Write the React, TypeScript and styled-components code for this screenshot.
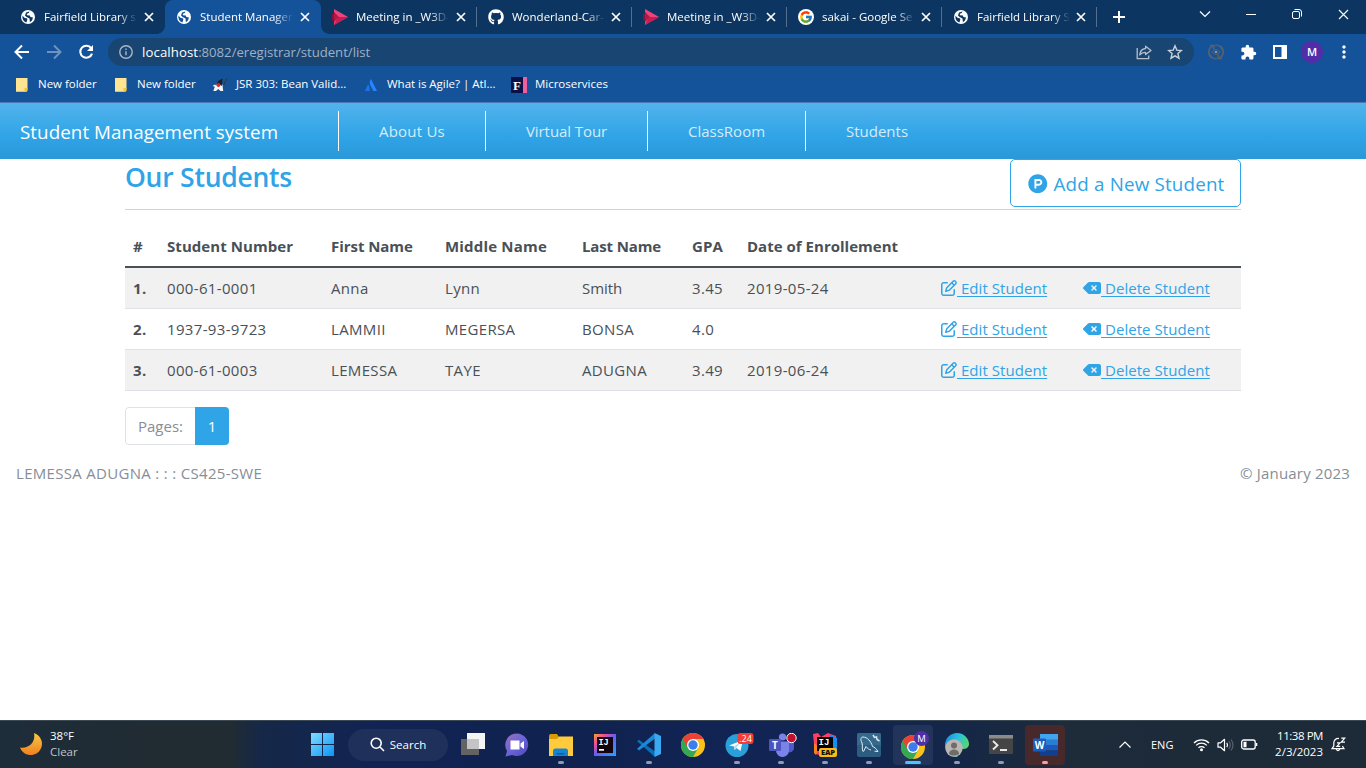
import React from 'react';
import styled, { createGlobalStyle } from 'styled-components';
import { FcGoogle } from 'react-icons/fc';
import { FaGithub, FaProductHunt, FaRegPenToSquare, FaDeleteLeft } from 'react-icons/fa6';
import { MdExtension, MdMoreVert } from 'react-icons/md';

const GlobalStyle = createGlobalStyle`
  * { box-sizing: border-box; }
  body {
    margin: 0;
    overflow: hidden;
    background: #fff;
    font-family: "Open Sans", "Noto Sans", sans-serif;
    font-size: 15px;
    line-height: 24px;
    color: #495057;
  }
  svg { display: block; flex: none; }
`;

const Screen = styled.div`
  display: flex;
  flex-direction: column;
  width: 1366px;
  height: 768px;
  overflow: hidden;
`;

/* ---------- browser ---------- */

const TabStrip = styled.div`
  display: flex;
  height: 34px;
  padding-left: 9px;
  background: #0c3661;
  color: #fff;
`;

const Tab = styled.div<{ $w: number; $active?: boolean }>`
  position: relative;
  display: flex;
  align-items: center;
  width: ${(p) => p.$w}px;
  height: 34px;
  padding: 0 11px 1px 11px;
  border-radius: 8px 8px 0 0;
  background: ${(p) => (p.$active ? '#14539a' : 'transparent')};
  font-size: 11.5px;
  color: #fff;

  &::before,
  &::after {
    content: ${(p) => (p.$active ? "''" : 'none')};
    position: absolute;
    bottom: 0;
    width: 8px;
    height: 8px;
  }
  &::before {
    left: -8px;
    background: radial-gradient(circle at 0 0, transparent 7.5px, #14539a 8px);
  }
  &::after {
    right: -8px;
    background: radial-gradient(circle at 100% 0, transparent 7.5px, #14539a 8px);
  }
`;

const TabRule = styled.span`
  width: 1px;
  height: 20px;
  margin: 7px 0 0 -1px;
  background: #54708f;
`;

const Favicon = styled.span`
  display: flex;
  justify-content: center;
  width: 16px;
  margin-right: 8px;
`;

const TabTitle = styled.span`
  width: 93px;
  overflow: hidden;
  white-space: nowrap;
  mask-image: linear-gradient(to right, #000 80%, transparent 100%);
`;

const TabClose = styled.span`
  display: flex;
  margin-left: auto;
`;

const NewTab = styled.span`
  display: flex;
  align-items: center;
  margin-left: 15px;
`;

const WindowButtons = styled.div`
  display: flex;
  align-items: center;
  height: 28px;
  margin-left: auto;
`;

const WindowButton = styled.span`
  display: flex;
  align-items: center;
  justify-content: center;
  width: 46px;
`;

const AddressRow = styled.div`
  display: flex;
  align-items: center;
  height: 34px;
  padding: 2px 0 0;
  background: #14539a;
`;

const NavButton = styled.span`
  display: flex;
  justify-content: center;
  width: 32px;
`;

const NavButtons = styled.div`
  display: flex;
  padding: 0 6px;
`;

const Omnibox = styled.div`
  display: flex;
  align-items: center;
  width: 1086px;
  height: 28px;
  padding: 0 11px;
  border-radius: 14px;
  background: #194573;
  font-size: 13.2px;
  color: #9fb1c5;
`;

const Host = styled.span`
  color: #fff;
  letter-spacing: 0.1px;
`;

const Url = styled.span`
  flex: 1;
  margin-left: 9px;
  padding-bottom: 1px;
  letter-spacing: -0.03px;
  white-space: nowrap;
`;

const OmniActions = styled.span`
  display: flex;
  align-items: center;
  gap: 15px;
`;

const Extensions = styled.div`
  display: flex;
  align-items: center;
  margin-left: 6px;
`;

const Avatar = styled.span`
  display: flex;
  align-items: center;
  justify-content: center;
  width: 22px;
  height: 22px;
  margin: 0 5px;
  border-radius: 50%;
  background: #512da8;
  font-size: 11px;
  font-weight: 600;
  color: #fff;
`;

const Bookmarks = styled.div`
  display: flex;
  align-items: center;
  height: 34px;
  padding: 0 0 0 14px;
  background: #14539a;
  font-size: 11.5px;
  color: #fff;
`;

const Bookmark = styled.span<{ $w: number; $gap?: number }>`
  display: flex;
  align-items: center;
  gap: ${(p) => p.$gap ?? 8}px;
  width: ${(p) => p.$w}px;
  white-space: nowrap;
`;

const BookmarkLabel = styled.span`
  padding-bottom: 2px;
  letter-spacing: -0.02px;
`;

const ChromeEdge = styled.div`
  height: 1px;
  background: #4b79b1;
`;

/* ---------- page ---------- */

const Page = styled.div`
  flex: 1;
  background: #fff;
`;

const SiteNav = styled.nav`
  display: flex;
  align-items: center;
  height: 56px;
  padding-left: 20px;
  background: linear-gradient(#52b3ec, #2fa4e7 60%, #2b98d8);
`;

const Brand = styled.span`
  width: 318px;
  padding-top: 2px;
  font-size: 18.8px;
  letter-spacing: 0.06px;
  line-height: 30px;
  color: #fff;
`;

const NavLink = styled.span<{ $w: number; $ls?: number }>`
  width: ${(p) => p.$w}px;
  height: 40px;
  padding: 8px 0 8px 40px;
  border-left: 1px solid #fff;
  color: rgba(255, 255, 255, 0.8);
  letter-spacing: ${(p) => p.$ls ?? 0}px;
  white-space: nowrap;
`;

const Container = styled.main`
  width: 1116px;
  margin: 0 auto;
`;

const TitleRow = styled.div`
  display: flex;
  justify-content: space-between;
  height: 51px;
  border-bottom: 1px solid #d2d3d4;
  margin-bottom: 16px;
`;

const Title = styled.h2`
  margin: 0;
  padding-top: 1px;
  font-size: 26.5px;
  font-weight: 600;
  letter-spacing: -0.24px;
  line-height: 34px;
  color: #2fa4e7;
`;

const AddButton = styled.a`
  display: flex;
  align-items: center;
  gap: 6px;
  width: 231px;
  height: 48px;
  padding: 1px 16px 0 17px;
  border: 1px solid #2fa4e7;
  border-radius: 5px;
  color: #2fa4e7;
  font-size: 18.8px;
  letter-spacing: 0.18px;
  white-space: nowrap;
`;

const Table = styled.table`
  width: 100%;
  table-layout: fixed;
  border-collapse: separate;
  border-spacing: 0;
`;

const Th = styled.th<{ $w: number; $ls: number }>`
  width: ${(p) => p.$w}px;
  height: 42px;
  padding: 0 8px 1px;
  border-bottom: 2px solid #495057;
  text-align: left;
  font-weight: 700;
  letter-spacing: ${(p) => p.$ls}px;
  white-space: nowrap;
`;

const Row = styled.tr<{ $striped: boolean }>`
  background: ${(p) => (p.$striped ? '#f1f1f1' : '#fff')};
`;

const Cell = styled.td<{ $bold?: boolean; $ls?: number }>`
  height: 41px;
  padding: 0 8px;
  border-bottom: 1px solid #dee2e6;
  font-weight: ${(p) => (p.$bold ? 700 : 400)};
  letter-spacing: ${(p) => p.$ls ?? 0}px;
  white-space: nowrap;
`;

const Action = styled.a`
  display: flex;
  align-items: center;
  color: #2fa4e7;
`;

const ActionText = styled.span`
  white-space: pre;
  letter-spacing: 0.06px;
  text-decoration: underline;
  text-underline-offset: 2px;
`;

const Pager = styled.div`
  display: flex;
  width: 104px;
  height: 38px;
  margin: 16px 0;
  border-radius: 4px;
  overflow: hidden;
`;

const PagerLabel = styled.span`
  width: 70px;
  padding: 6px 12px;
  border: 1px solid #dee2e6;
  border-right: 0;
  border-radius: 4px 0 0 4px;
  color: #868e96;
`;

const PagerCurrent = styled.span`
  width: 34px;
  padding: 7px 0;
  background: #2fa4e7;
  text-align: center;
  color: #fff;
`;

const Footer = styled.footer`
  display: flex;
  justify-content: space-between;
  padding: 0 16px;
  color: #868e96;
`;

const FooterText = styled.span<{ $ls: number }>`
  letter-spacing: ${(p) => p.$ls}px;
`;

/* ---------- taskbar ---------- */

const Taskbar = styled.div`
  display: flex;
  align-items: center;
  height: 48px;
  border-top: 1px solid #3b4954;
  background: linear-gradient(
    90deg, #1d2d3a 0, #202b33 130px, #212b32 230px, #152848 262px, #112353 380px,
    #10224f 560px, #112454 760px, #13264b 930px, #1d2b3a 1060px, #1d2a37 1366px
  );
  color: #fff;
  font-size: 11.5px;
`;

const Weather = styled.div`
  display: flex;
  align-items: center;
  gap: 8px;
  width: 300px;
  padding: 0 0 2px 20px;
  line-height: 16px;
`;

const Dim = styled.div`
  color: #c0c5ca;
`;

const Slot = styled.span<{ $bg?: string; $run?: string; $runW?: number; $shift?: number }>`
  position: relative;
  display: flex;
  align-items: center;
  justify-content: center;
  width: 40px;
  height: 40px;
  margin: 0 2px;
  padding-left: ${(p) => p.$shift ?? 0}px;
  border-radius: 4px;
  background: ${(p) => p.$bg ?? 'transparent'};

  &::after {
    content: ${(p) => (p.$run ? "''" : 'none')};
    position: absolute;
    left: calc(50% - ${(p) => (p.$runW ?? 6) / 2}px);
    bottom: 1px;
    width: ${(p) => p.$runW ?? 6}px;
    height: 3px;
    border-radius: 2px;
    background: ${(p) => p.$run ?? 'transparent'};
  }
`;

const SearchPill = styled.div`
  display: flex;
  align-items: center;
  justify-content: center;
  gap: 5px;
  width: 100px;
  height: 32px;
  margin: 0 3px 0 4px;
  border-radius: 16px;
  background: #1f305b;
`;

const Tray = styled.div`
  display: flex;
  align-items: center;
  margin-left: auto;
  padding-right: 20px;
`;

const Lang = styled.span`
  width: 42px;
  margin-left: 20px;
  font-size: 11px;
`;

const TrayIcons = styled.div`
  display: flex;
  align-items: center;
  gap: 7px;
`;

const Clock = styled.div`
  width: 65px;
  margin-right: 8px;
  padding-bottom: 2px;
  text-align: right;
  line-height: 16px;
`;

const ClockTime = styled.div`
  letter-spacing: -0.45px;
`;

/* ---------- drawings ---------- */

const Globe = ({ land = '#0c3661' }: { land?: string }) => (
  <svg width="14" height="14" viewBox="0 0 14 14">
    <circle cx="7" cy="7" r="7" fill="#fff" />
    <path
      d="M1.500 5.800 3.800 8l2 .3.600 1.200-1 2.900C2.500 11.800 1.100 9 1.500 5.800zM5 2.400l3.400-1L7.800 3l-2 .8L6 5.200l2.800.2L9.400 7 12 7.600 11 10.400 8.900 12.200l-.4-3.600L5.600 7 4 5.400z"
      fill={land}
    />
  </svg>
);

const Stream = () => (
  <svg width="16" height="16" viewBox="0 0 16 16">
    <path d="M2 0 16 8 2 16z" fill="#f0437c" />
    <path d="M2 16 16 8H6z" fill="#c81e4f" />
    <path d="M0 4.500 6 8 0 12z" fill="#8c1238" />
    <path d="M2 3 7 8 2 13z" fill="#b01a48" />
  </svg>
);

const Cross = ({ s = 8, w = 1.7 }: { s?: number; w?: number }) => (
  <svg width={s + 2} height={s + 2} viewBox={`-1 -1 ${s + 2} ${s + 2}`} stroke="#fff" strokeWidth={w}>
    <path d={`M0 0 ${s} ${s}M${s} 0 0 ${s}`} />
  </svg>
);

const Arrow = ({ forward }: { forward?: boolean }) => (
  <svg width="16" height="16" viewBox="0 0 16 16" fill="none" stroke={forward ? '#6d93c0' : '#fff'} strokeWidth="2">
    <path d={forward ? 'M1 8h13M8 1.500 14.500 8 8 14.500' : 'M15 8H2M8 1.500 1.500 8 8 14.500'} />
  </svg>
);

const Reload = () => (
  <svg width="16" height="16" viewBox="0 0 16 16">
    <path d="M13.200 4.200A6 6 0 1 0 14 9.600" fill="none" stroke="#fff" strokeWidth="2.100" />
    <path d="M15 1v6H9z" fill="#fff" />
  </svg>
);

const Info = () => (
  <svg width="14" height="14" viewBox="0 0 14 14" fill="none" stroke="#aab8c8" strokeWidth="1.400">
    <circle cx="7" cy="7" r="6.200" />
    <path d="M7 6.300v4M7 3.500v1.500" />
  </svg>
);

const Share = () => (
  <svg width="16" height="16" viewBox="0 0 16 16" fill="none" stroke="#b5c0cc" strokeWidth="1.300">
    <path d="M1.200 4v10.600h11.500v-3" />
    <path d="M9.600 2.200 15 6.400 9.600 10.600V8.300C7 8.300 5 9.200 3.800 11 4 7.600 6 4.900 9.600 4.500z" strokeLinejoin="round" />
  </svg>
);

const Star = () => (
  <svg width="16" height="16" viewBox="0 0 16 16" fill="none" stroke="#c9d1da" strokeWidth="1.400">
    <path d="m8 1.800 1.800 4.300 4.600.4-3.500 3.100 1.100 4.600L8 11.800 4 14.200l1.100-4.600L1.600 6.500l4.600-.4z" />
  </svg>
);

const SyncEye = () => (
  <svg width="16" height="16" viewBox="0 0 16 16" fill="none" stroke="#55616e" strokeWidth="1.700">
    <path d="M4 14A7 7 0 0 1 4.500 2M1.800 1.500h4V5.500M12 2a7 7 0 0 1-.5 12M14.200 14.500h-4v-4" />
    <path d="M7 1.200a6.700 6.700 0 0 1 7.500 5.300M9 14.800a6.700 6.700 0 0 1-7.500-5.300" strokeWidth="1.300" />
    <path d="M4 8q4-5 8 0-4 5-8 0z" strokeWidth="1.200" />
    <circle cx="8" cy="8" r="1.300" fill="#8a949e" stroke="none" />
  </svg>
);

const SidePanel = () => (
  <svg width="14" height="14" viewBox="0 0 14 14">
    <path d="M0 0h14v14H0zM2 2v10h6.500V2z" fill="#fff" fillRule="evenodd" />
  </svg>
);

const Note = () => (
  <svg width="16" height="16" viewBox="0 0 16 16">
    <path d="M2 1h11.500v10.500l-.5 3H2z" fill="#ffe491" />
    <path d="M10.500 14.500v-3.200l3-.6v2.800l-.6 1z" fill="#f0c43c" />
    <path d="M2 14h10v1H2z" fill="#e8c04c" />
  </svg>
);

const Duke = () => (
  <svg width="16" height="16" viewBox="0 0 16 16">
    <path d="M8 4 3.500 8l-2.200 6H4l2.200-2 2.300 2h2.700l-.7-6z" fill="#f4f6f8" />
    <path d="M10.500 1.500 6 4 4 8.500l3.500-1L9.800 9z" fill="#1c2026" />
    <circle cx="6.500" cy="8" r="1.900" fill="#e0252f" />
    <path d="m12 8 1-3.500M13.800 4l1-2.500" stroke="#2c3c50" strokeWidth="1.500" />
    <path d="m.5 9 2.500-1.500L4 10z" fill="#fff" />
  </svg>
);

const Atlassian = () => (
  <svg width="14" height="14" viewBox="0 0 14 14">
    <path d="M7 1c-1.800 3-1.500 5 0 7.500L9.300 13H13z" fill="#2684ff" />
    <path d="M4 6.200 1 13h4.500C6 10.500 5.500 8 4 6.200z" fill="#1d72ea" />
  </svg>
);

const FBook = () => (
  <svg width="16" height="16" viewBox="0 0 16 16">
    <path d="M0 0h12v16H0z" fill="#0b1047" />
    <path d="M12 0h4v16h-4z" fill="#ee5f9d" />
    <text x="2" y="13" fontSize="13" fontWeight="700" fill="#fff" fontFamily="Liberation Serif">F</text>
  </svg>
);

const Moon = () => (
  <svg width="22" height="22" viewBox="0 0 22 22">
    <defs>
      <linearGradient id="moon" x1="0" y1="0" x2="0" y2="1">
        <stop offset="0" stopColor="#f6c944" />
        <stop offset="1" stopColor="#f08020" />
      </linearGradient>
    </defs>
    <path d="M14 0A11.300 11.300 0 1 1 0 14.500C8.500 16 16 9.500 14 0z" fill="url(#moon)" />
  </svg>
);

const Windows = () => (
  <svg width="23" height="23" viewBox="0 0 23 23">
    <defs>
      <linearGradient id="win" x1="0" y1="0" x2="1" y2="1">
        <stop offset="0" stopColor="#7fdcff" />
        <stop offset="1" stopColor="#0a94f8" />
      </linearGradient>
    </defs>
    <path d="M0 0h11v11H0zM12 0h11v11H12zM0 12h11v11H0zM12 12h11v11H12z" fill="url(#win)" />
  </svg>
);

const Magnifier = () => (
  <svg width="15" height="15" viewBox="0 0 15 15" fill="none" stroke="#fff" strokeWidth="1.600">
    <circle cx="6.200" cy="6.200" r="5" />
    <path d="m10 10 4 4" />
  </svg>
);

const TaskView = () => (
  <svg width="24" height="23" viewBox="0 0 24 23">
    <path d="M6 0h18v16H6z" fill="#f4f4f4" />
    <path d="M0 6h18v16H0z" fill="#636363" />
    <path d="M6 6h12v10H6z" fill="#c2c4c6" />
  </svg>
);

const Chat = () => (
  <svg width="24" height="24" viewBox="0 0 24 24">
    <defs>
      <linearGradient id="chat" x1="0" y1="0" x2="1" y2="1">
        <stop offset="0" stopColor="#9b6fb8" />
        <stop offset=".5" stopColor="#6a64d8" />
        <stop offset="1" stopColor="#5048b8" />
      </linearGradient>
    </defs>
    <path d="M12 .5a11.300 11.300 0 1 1-5 21.500L.5 23.500 2 18A11.500 11.500 0 0 1 12 .5z" fill="url(#chat)" />
    <path d="M5.500 7.500h9v9h-9zM15.500 10.500 19 8v8l-3.500-2.500z" fill="#fff" />
  </svg>
);

const Explorer = () => (
  <svg width="24" height="22" viewBox="0 0 24 22">
    <path d="M0 2Q0 0 2 0h6l2 3v4H0z" fill="#d99a07" />
    <path d="M0 5h8l2-2.500h14V22H0z" fill="#ffcb3c" />
    <path d="M4 22v-5q0-2.500 2.500-2.500h10Q19 14.500 19 17v5z" fill="#1683d3" />
    <path d="M7.500 19h8v1.500h-8z" fill="#0b5da4" />
  </svg>
);

const Idea = () => (
  <svg width="22" height="22" viewBox="0 0 22 22">
    <defs>
      <linearGradient id="idea" x1="0" y1="0" x2="1" y2="1">
        <stop offset="0" stopColor="#f9a02d" />
        <stop offset=".25" stopColor="#ef4f96" />
        <stop offset=".5" stopColor="#6a5cf5" />
        <stop offset="1" stopColor="#21a5ff" />
      </linearGradient>
    </defs>
    <path d="M0 0h22v22H0z" fill="url(#idea)" />
    <path d="M3 3h16v16H3z" fill="#120510" />
    <text x="4.500" y="11" fontSize="8.500" fontWeight="700" fill="#fff" fontFamily="Liberation Mono">IJ</text>
    <path d="M5 15h5v1.700H5z" fill="#fff" />
  </svg>
);

const VsCode = () => (
  <svg width="24" height="24" viewBox="0 0 24 24">
    <path d="M0 8.200 2 6.700 18 18.500V24z" fill="#0a6fb8" />
    <path d="M0 15.800 18 0v5.500L2 17.500z" fill="#1a8ad8" />
    <path d="M17.500 0 24 3v18l-6.500 3z" fill="#3aa9f2" />
  </svg>
);

const ChromeLogo = () => (
  <svg width="24" height="24" viewBox="0 0 24 24">
    <circle cx="12" cy="12" r="12" fill="#fbc116" />
    <path d="M1.600 6A12 12 0 0 0 12 24l5.200-9-5.200-3z" fill="#34a853" />
    <path d="M12 12 1.600 6A12 12 0 0 1 22.400 6H12z" fill="#ea4335" />
    <path d="M1.600 6 6.800 15 12 12V6z" fill="#ea4335" />
    <path d="M1.600 6 6.800 15 5 16 .8 8z" fill="#34a853" />
    <circle cx="12" cy="12" r="6" fill="#fff" />
    <circle cx="12" cy="12" r="4.700" fill="#3b7ded" />
  </svg>
);

const Telegram = () => (
  <svg width="30" height="24" viewBox="0 0 30 24">
    <circle cx="12" cy="12.500" r="11.500" fill="#2b9fd9" />
    <path d="m4 12.500 14-5.500-2.500 11-4-3-2 2-.5-3.500z" fill="#fff" />
    <path d="m9 13.500 7-5-4.500 6-2 2.500z" fill="#b9d9ec" />
    <rect x="12.500" y="0" width="16" height="11" rx="3" fill="#f23f36" />
    <text x="14" y="8.800" fontSize="9" fill="#fff" fontFamily="Open Sans" textLength="13">.24</text>
  </svg>
);

const Teams = () => (
  <svg width="30" height="24" viewBox="0 0 30 24">
    <circle cx="14.500" cy="4" r="3.600" fill="#7b83eb" />
    <path d="M19 8.500h7v7a4.500 4.500 0 0 1-6 3.500z" fill="#5059c9" />
    <path d="M8 8.500h13v8.500a6.500 6.500 0 0 1-13 1z" fill="#7b83eb" />
    <rect x="1" y="6" width="12" height="12" rx="1" fill="#4b53bc" />
    <text x="4" y="15.700" fontSize="10" fontWeight="700" fill="#fff" fontFamily="Open Sans">T</text>
    <circle cx="23.500" cy="5" r="4.700" fill="#c50f2e" stroke="#fff" strokeWidth="1" />
  </svg>
);

const IdeaEap = () => (
  <svg width="24" height="24" viewBox="0 0 24 24">
    <path d="M0 1 5 0l3 4 7-4 8 3 1 16-8 5-14-3z" fill="#ff3f62" />
    <path d="m16 1 8 4v12l-8 2z" fill="#178cf5" />
    <path d="m1 10 5 4-3 8-2-2z" fill="#fc801d" />
    <path d="M4 4h16v14H4z" fill="#000" />
    <text x="5.500" y="12" fontSize="9" fontWeight="700" fill="#fff" fontFamily="Liberation Mono">IJ</text>
    <rect x="6" y="15" width="18" height="9" rx="2" fill="#ffb912" />
    <text x="8" y="22.300" fontSize="7.500" fontWeight="800" fill="#111" fontFamily="Open Sans" textLength="14">EAP</text>
  </svg>
);

const MySql = () => (
  <svg width="24" height="24" viewBox="0 0 24 24">
    <rect width="24" height="24" rx="2" fill="#2a5d80" />
    <path d="M0 2q0-2 2-2h20q2 0 2 2v10H0z" fill="#356a8c" />
    <path
      d="M6 18.500C4.500 15 6 13 5 10 3 6 4 4 6 4c4 0 8 4 9.500 9.500 2 .5 4 2.500 5.500 5l-3.500-.3M6.500 18.500l2.500-5c1.500 2 3 3 5 3.500"
      fill="none"
      stroke="#e6eef4"
      strokeWidth="1"
    />
    <path d="m16 2 1.500 2.500 2-.5.5 2.500 2.500 1.500" fill="none" stroke="#dbe6ee" strokeWidth="1.500" />
  </svg>
);

const ChromeProfile = () => (
  <svg width="28" height="28" viewBox="0 0 28 28">
    <svg y="4" width="24" height="24">
      <ChromeLogo />
    </svg>
    <circle cx="20.500" cy="7.500" r="7.500" fill="#512da8" />
    <text x="20.500" y="11" fontSize="9.500" textAnchor="middle" fill="#fff" fontFamily="Open Sans">M</text>
  </svg>
);

const Edge = () => (
  <svg width="24" height="24" viewBox="0 0 24 24">
    <defs>
      <linearGradient id="edge" x1="0" y1=".2" x2="1" y2=".6">
        <stop offset="0" stopColor="#1b8fdd" />
        <stop offset=".5" stopColor="#2cc3dc" />
        <stop offset="1" stopColor="#62d957" />
      </linearGradient>
    </defs>
    <path d="M12 0a12 11.500 0 0 1 12 11c0 4-4 5.500-7.500 5L12 24A12 12 0 0 1 12 0z" fill="url(#edge)" />
    <path d="M10 8c4-1 7 2 6 7l-2 5z" fill="#1467b3" />
    <circle cx="9" cy="15" r="8.700" fill="#b9b6b3" />
    <circle cx="9" cy="12.500" r="3" fill="#6f6c69" />
    <path d="M4 21c0-6 10-6 10 0-3 2-7 2-10 0z" fill="#6f6c69" />
  </svg>
);

const Terminal = () => (
  <svg width="24" height="19" viewBox="0 0 24 19">
    <rect width="24" height="19" rx="1" fill="#454545" />
    <path d="M0 0h24v3.500H0z" fill="#8b8b8b" />
    <path d="m4 6 4.500 4.200L4 14.500M11 15h7" fill="none" stroke="#e8e8e8" strokeWidth="1.900" />
  </svg>
);

const Word = () => (
  <svg width="25" height="22" viewBox="0 0 25 22">
    <path d="M7 0h18v6H7z" fill="#41a5ee" />
    <path d="M7 5.500h18V11H7z" fill="#2b7cd3" />
    <path d="M7 11h18v5.500H7z" fill="#185abd" />
    <path d="M7 16.500h18V22H7z" fill="#103f91" />
    <rect x="0" y="4.500" width="13" height="13" rx="1" fill="#1a5dbe" />
    <text x="1.700" y="14.700" fontSize="10" fontWeight="700" fill="#fff" fontFamily="Open Sans" textLength="9.600">W</text>
  </svg>
);

const Chevron = ({ up }: { up?: boolean }) => (
  <svg width="12" height="8" viewBox="0 0 12 8" fill="none" stroke="#fff" strokeWidth="1.200">
    <path d={up ? 'M.5 6.500 6 1l5.500 5.500' : 'M1 1.500 6 6.500l5-5'} />
  </svg>
);

const Wifi = () => (
  <svg width="17" height="14" viewBox="0 0 17 14" fill="none" stroke="#fff" strokeWidth="1.300">
    <path d="M1 5a10.600 10.600 0 0 1 15 0M3.200 7.400a7.500 7.500 0 0 1 10.600 0M5.500 9.800a4.200 4.200 0 0 1 6 0" />
    <circle cx="8.500" cy="11.700" r="1.500" fill="#fff" stroke="none" />
  </svg>
);

const Speaker = () => (
  <svg width="17" height="14" viewBox="0 0 17 14" fill="none" stroke="#fff" strokeWidth="1.200">
    <path d="M1 4.800h2.600L7.500 1.300v11.400L3.600 9.200H1z" strokeLinejoin="round" />
    <path d="M9.800 4.800q1.500 2.200 0 4.400" />
    <path d="M11.800 3q3 4 0 8M14 1.500q4 5.500 0 11" stroke="#56636f" />
  </svg>
);

const Battery = () => (
  <svg width="17" height="11" viewBox="0 0 17 11">
    <rect x=".7" y="1" width="13.500" height="9" rx="2" fill="none" stroke="#fff" strokeWidth="1.300" />
    <path d="M2.500 2.800h3v5.400h-3zM15 4h1.300v3H15z" fill="#fff" />
  </svg>
);

const Bell = () => (
  <svg width="15" height="15" viewBox="0 0 15 15" fill="none" stroke="#fff" strokeWidth="1.200">
    <path d="M8 1.500C4.500 1.200 2.800 3.500 2.800 6v3L1 11.700h12l-1.600-2.700M5.200 12q1.800 3.200 3.600 0" />
    <path d="M10.300 1.200h3.400l-3.400 4h3.700M6 5.800h3l-3 3.500h3.200" />
  </svg>
);

const GoogleDisc = styled.span`
  display: flex;
  align-items: center;
  justify-content: center;
  width: 16px;
  height: 16px;
  border-radius: 50%;
  background: #fff;
`;

/* ---------- data ---------- */

const tabs = [
  { title: 'Fairfield Library sy', icon: <Globe />, w: 156 },
  { title: 'Student Managem', icon: <Globe land="#14539a" />, w: 156, active: true },
  { title: 'Meeting in _W3D-', icon: <Stream />, w: 156 },
  { title: 'Wonderland-Car-', icon: <FaGithub size={16} />, w: 155 },
  { title: 'Meeting in _W3D-', icon: <Stream />, w: 155 },
  { title: 'sakai - Google Se', icon: <GoogleDisc><FcGoogle size={14} /></GoogleDisc>, w: 155 },
  { title: 'Fairfield Library Sy', icon: <Globe />, w: 155 },
];

const bookmarks = [
  { label: 'New folder', icon: <Note />, w: 99 },
  { label: 'New folder', icon: <Note />, w: 99 },
  { label: 'JSR 303: Bean Valid...', icon: <Duke />, w: 152 },
  { label: 'What is Agile? | Atl...', icon: <Atlassian />, w: 147, gap: 9 },
  { label: 'Microservices', icon: <FBook />, w: 110 },
];

const columns: [string, number, number][] = [
  ['#', 34, 0],
  ['Student Number', 164, 0.06],
  ['First Name', 114, -0.05],
  ['Middle Name', 137, 0.19],
  ['Last Name', 110, -0.14],
  ['GPA', 55, 0.1],
  ['Date of Enrollement', 194, 0.02],
  ['', 142, 0],
  ['', 166, 0],
];

const students = [
  ['000-61-0001', 'Anna', 'Lynn', 'Smith', '3.45', '2019-05-24'],
  ['1937-93-9723', 'LAMMII', 'MEGERSA', 'BONSA', '4.0', ''],
  ['000-61-0003', 'LEMESSA', 'TAYE', 'ADUGNA', '3.49', '2019-06-24'],
];

const runGrey = '#8f9bb0';

export default function App() {
  return (
    <Screen>
      <GlobalStyle />
      <TabStrip>
        {tabs.map((t, i) => (
          <React.Fragment key={i}>
            <Tab $w={t.w} $active={t.active}>
              <Favicon>{t.icon}</Favicon>
              <TabTitle>{t.title}</TabTitle>
              <TabClose>
                <Cross />
              </TabClose>
            </Tab>
            {i > 1 && <TabRule />}
          </React.Fragment>
        ))}
        <NewTab>
          <svg width="14" height="14" viewBox="0 0 14 14" stroke="#fff" strokeWidth="2">
            <path d="M7 1v12M1 7h12" />
          </svg>
        </NewTab>
        <WindowButtons>
          <WindowButton>
            <Chevron />
          </WindowButton>
          <WindowButton>
            <svg width="10" height="1">
              <path d="M0 .5h10" stroke="#fff" strokeWidth="1" />
            </svg>
          </WindowButton>
          <WindowButton>
            <svg width="10" height="10" viewBox="0 0 10 10" fill="none" stroke="#fff">
              <rect x=".5" y="2.500" width="7" height="7" rx="1.500" />
              <path d="M2.500.5H7A2.500 2.500 0 0 1 9.500 3v4.500" />
            </svg>
          </WindowButton>
          <WindowButton>
            <Cross s={9} w={1.1} />
          </WindowButton>
        </WindowButtons>
      </TabStrip>

      <AddressRow>
        <NavButtons>
          <NavButton>
            <Arrow />
          </NavButton>
          <NavButton>
            <Arrow forward />
          </NavButton>
          <NavButton>
            <Reload />
          </NavButton>
        </NavButtons>
        <Omnibox>
          <Info />
          <Url>
            <Host>localhost</Host>:8082/eregistrar/student/list
          </Url>
          <OmniActions>
            <Share />
            <Star />
          </OmniActions>
        </Omnibox>
        <Extensions>
          <NavButton>
            <SyncEye />
          </NavButton>
          <NavButton>
            <MdExtension size={17} color="#fff" />
          </NavButton>
          <NavButton>
            <SidePanel />
          </NavButton>
          <Avatar>M</Avatar>
          <NavButton>
            <MdMoreVert size={20} color="#fff" />
          </NavButton>
        </Extensions>
      </AddressRow>

      <Bookmarks>
        {bookmarks.map((b, i) => (
          <Bookmark key={i} $w={b.w} $gap={b.gap}>
            {b.icon}
            <BookmarkLabel>{b.label}</BookmarkLabel>
          </Bookmark>
        ))}
      </Bookmarks>
      <ChromeEdge />

      <Page>
        <SiteNav>
          <Brand>Student Management system</Brand>
          <NavLink $w={147} $ls={0.22}>About Us</NavLink>
          <NavLink $w={162} $ls={-0.08}>Virtual Tour</NavLink>
          <NavLink $w={158}>ClassRoom</NavLink>
          <NavLink $w={150}>Students</NavLink>
        </SiteNav>
        <Container>
          <TitleRow>
            <Title>Our Students</Title>
            <AddButton>
              <FaProductHunt size={19.5} />
              Add a New Student
            </AddButton>
          </TitleRow>
          <Table>
            <thead>
              <tr>
                {columns.map(([label, w, ls], i) => (
                  <Th key={i} $w={w} $ls={ls}>
                    {label}
                  </Th>
                ))}
              </tr>
            </thead>
            <tbody>
              {students.map((s, i) => (
                <Row key={i} $striped={i % 2 === 0}>
                  <Cell $bold $ls={0.3}>{i + 1}.</Cell>
                  {s.map((value, c) => (
                    <Cell key={c} $ls={value === 'Smith' ? -0.05 : 0.34}>
                      {value}
                    </Cell>
                  ))}
                  <Cell>
                    <Action>
                      <FaRegPenToSquare size={16} />
                      <ActionText> Edit Student</ActionText>
                    </Action>
                  </Cell>
                  <Cell>
                    <Action>
                      <FaDeleteLeft size={18} />
                      <ActionText> Delete Student</ActionText>
                    </Action>
                  </Cell>
                </Row>
              ))}
            </tbody>
          </Table>
          <Pager>
            <PagerLabel>Pages:</PagerLabel>
            <PagerCurrent>1</PagerCurrent>
          </Pager>
        </Container>
        <Footer>
          <FooterText $ls={0.31}>LEMESSA ADUGNA : : : CS425-SWE</FooterText>
          <FooterText $ls={0.19}>© January 2023</FooterText>
        </Footer>
      </Page>

      <Taskbar>
        <Weather>
          <Moon />
          <div>
            <div>38°F</div>
            <Dim>Clear</Dim>
          </div>
        </Weather>
        <Slot><Windows /></Slot>
        <SearchPill>
          <Magnifier />
          Search
        </SearchPill>
        <Slot><TaskView /></Slot>
        <Slot><Chat /></Slot>
        <Slot $run={runGrey}><Explorer /></Slot>
        <Slot><Idea /></Slot>
        <Slot $run={runGrey}><VsCode /></Slot>
        <Slot><ChromeLogo /></Slot>
        <Slot $run={runGrey} $shift={6}><Telegram /></Slot>
        <Slot $run={runGrey} $shift={4}><Teams /></Slot>
        <Slot $run={runGrey}><IdeaEap /></Slot>
        <Slot $run={runGrey}><MySql /></Slot>
        <Slot $run="#4cc2ff" $runW={16} $bg="#23345a" $shift={4}><ChromeProfile /></Slot>
        <Slot $run={runGrey}><Edge /></Slot>
        <Slot $run={runGrey}><Terminal /></Slot>
        <Slot $run="#ff99a4" $bg="#47292c"><Word /></Slot>
        <Tray>
          <Chevron up />
          <Lang>ENG</Lang>
          <TrayIcons>
            <Wifi />
            <Speaker />
            <Battery />
          </TrayIcons>
          <Clock>
            <ClockTime>11:38 PM</ClockTime>
            <div>2/3/2023</div>
          </Clock>
          <Bell />
        </Tray>
      </Taskbar>
    </Screen>
  );
}
